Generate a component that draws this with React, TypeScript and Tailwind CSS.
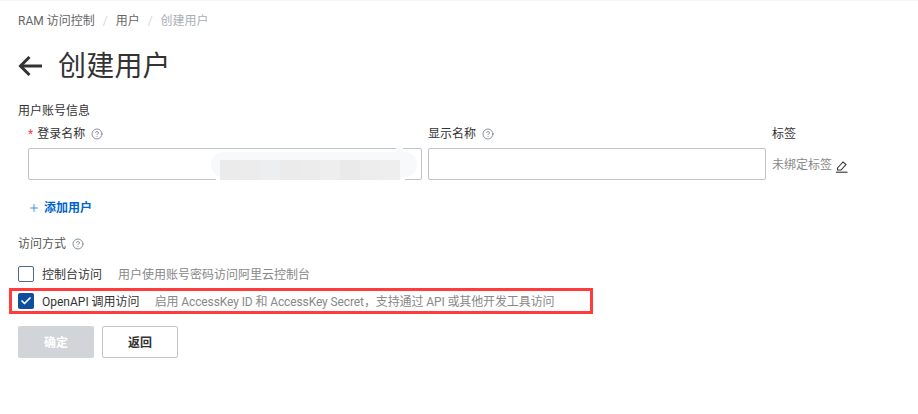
import React from 'react';
import { Check, CircleHelp, Plus } from 'lucide-react';

const font = '[font-family:"Roboto","Noto_Sans_CJK_SC",sans-serif]';

const Help = ({ className = '' }: { className?: string }) => (
  <CircleHelp className={`w-[12px] h-[12px] text-[#7d828b] ${className}`} strokeWidth={1.8} />
);

const BackArrow = () => (
  <svg width="24" height="20" viewBox="0 0 24 20" fill="none" stroke="#333" strokeWidth="3">
    <path d="M24 10 H3" />
    <path d="M11.5 1 L2.5 10 L11.5 19" />
  </svg>
);

const EditIcon = () => (
  <svg width="13" height="14" viewBox="0 0 13 14" fill="none" stroke="#333" strokeWidth="1.1" className="ml-[3px] mt-[2px]">
    <path d="M2.5 9 L8 3 L11 5.6 L6 11 L2.5 11 Z" />
    <path d="M1 13.2 H12.5" />
  </svg>
);

const mosaic = ['bg-[#ebebeb]', 'bg-[#ececec]', 'bg-[#eceef0]', 'bg-[#ebebeb]', 'bg-[#ececec]', 'bg-[#eeeeee]', 'bg-[#eaeaea]', 'bg-[#ededed]', 'bg-[#eeeeee]'];

export default function App() {
  return (
    <div className={`relative w-[918px] h-[414px] bg-white overflow-hidden text-[12px] leading-[16px] text-[#333] ${font}`}>
      <div className="h-[1px] bg-[#f5f5f5]" />

      <nav className="flex items-center pl-[18px] pt-[12px] h-[28px] text-[#666]">
        <span>RAM 访问控制</span>
        <span className="mx-[8px] text-[#d5d7db]">/</span>
        <span>用户</span>
        <span className="mx-[8px] text-[#d5d7db]">/</span>
        <span className="text-[#aaaeb5]">创建用户</span>
      </nav>

      <div className="flex items-center pl-[18px] mt-[17px] h-[40px]">
        <BackArrow />
        <h1 className="ml-[16px] pt-[1px] text-[28px] tracking-[0.2px] leading-[40px] font-normal text-[#333]">创建用户</h1>
      </div>

      <div className="pl-[18px] mt-[17px] h-[16px]">用户账号信息</div>

      <div className="flex pl-[28px] mt-[7px]">
        <div className="w-[394px]">
          <div className="flex items-center h-[16px]">
            <span className="text-[#e5484d] mr-[4px]">*</span>
            <span>登录名称</span>
            <Help className="ml-[6px]" />
          </div>
          <div className="mt-[6px] h-[32px] border border-[#c1c4cb] rounded-[2px] bg-white" />
        </div>
        <div className="w-[338px] ml-[6px]">
          <div className="flex items-center h-[16px]">
            <span>显示名称</span>
            <Help className="ml-[6px]" />
          </div>
          <div className="mt-[6px] h-[32px] border border-[#c1c4cb] rounded-[2px] bg-white" />
        </div>
        <div className="ml-[6px]">
          <div className="h-[16px]">标签</div>
          <div className="flex items-center mt-[7px] h-[32px] text-[#888]">
            <span>未绑定标签</span>
            <EditIcon />
          </div>
        </div>
      </div>

      {/* 打码区域 */}
      <div className="absolute left-[216px] top-[175px] w-[189px] h-[6px] bg-white" />
      <div className="absolute left-[396px] top-[148px] w-[7px] h-[6px] bg-[#f8f9fa]" />
      <div className="absolute left-[211px] top-[152px] w-[206px] h-[25px] rounded-[12px] bg-[#f8f9fa]" />
      <div className="absolute left-[220px] top-[160px] flex w-[180px] h-[20px]">
        {mosaic.map((c, i) => (
          <div key={i} className={`w-[20px] h-full ${c}`} />
        ))}
      </div>

      <div className="flex items-center pl-[28px] mt-[19px] h-[16px] text-[#0064c8] font-bold">
        <Plus className="w-[12px] h-[12px] text-[#2f86dc] mr-[4px]" strokeWidth={1.8} />
        <span>添加用户</span>
      </div>

      <div className="flex items-center pl-[18px] mt-[20px] h-[16px] text-[#555]">
        <span>访问方式</span>
        <Help className="ml-[6px]" />
      </div>

      <div className="flex items-center pl-[18px] mt-[13px] h-[18px]">
        <span className="w-[16px] h-[16px] border border-[#4e6a8c] rounded-[2px] bg-white" />
        <span className="ml-[8px] pt-[1px]">控制台访问</span>
        <span className="ml-[16px] pt-[1px] text-[#888]">用户使用账号密码访问阿里云控制台</span>
      </div>

      <div className="flex items-center ml-[9px] pl-[6px] mt-[5px] w-[584px] h-[26px] border-[3px] border-[#ff3b3b]">
        <span className="flex items-center justify-center w-[16px] h-[16px] rounded-[2px] bg-[#0b4f9e]">
          <Check className="w-[12px] h-[12px] text-white" strokeWidth={3.5} />
        </span>
        <span className="ml-[8px] pt-[1px]">OpenAPI 调用访问</span>
        <span className="ml-[15px] pt-[1px] tracking-[-0.11px] text-[#888]">启用 AccessKey ID 和 AccessKey Secret，支持通过 API 或其他开发工具访问</span>
      </div>

      <div className="flex pl-[18px] mt-[12px] gap-[8px]">
        <button className="w-[76px] h-[32px] pt-[1px] rounded-[2px] bg-[#d1d4d9] text-white font-bold">确定</button>
        <button className="w-[76px] h-[32px] pt-[1px] rounded-[2px] border border-[#c1c4cb] bg-white text-[#333] font-bold">返回</button>
      </div>
    </div>
  );
}
